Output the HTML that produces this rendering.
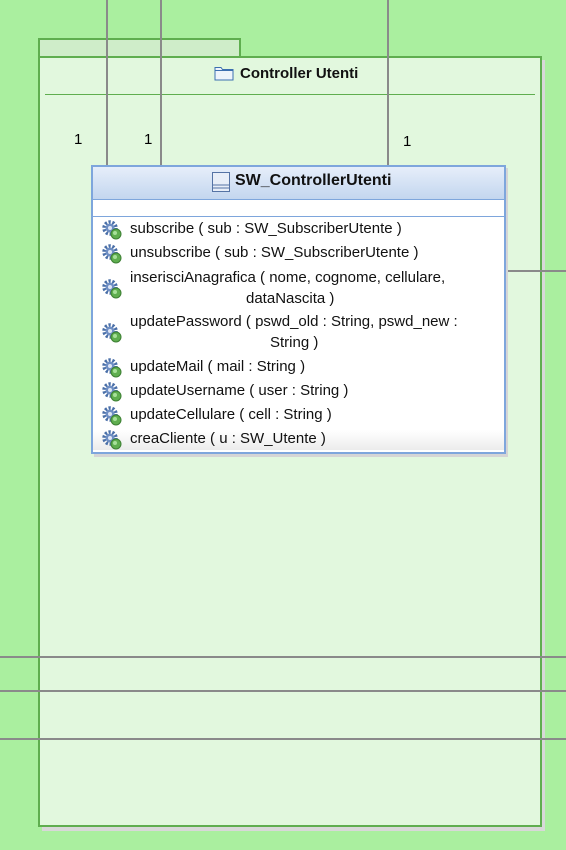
<!DOCTYPE html>
<html><head><style>
body{margin:0;width:566px;height:850px;background:#aaef9f;position:relative;overflow:hidden;font-family:"Liberation Sans",sans-serif;}
.a{position:absolute}
.v{position:absolute;width:2px;background:#8a8a8a}
.h{position:absolute;height:2px;background:#8a8a8a;left:0;width:566px}
.row{position:absolute;left:130px;font-size:15px;color:#111;white-space:nowrap}
.ic{position:absolute;left:101px}
</style></head><body>
<div class="a" style="left:38px;top:38px;width:199px;height:18px;background:#cfedc9;border:2px solid #5fae4f;border-bottom:none"></div>
<div class="a" style="left:42px;top:60px;width:503px;height:771px;background:#d8d8d8"></div>
<div class="a" style="left:38px;top:56px;width:500px;height:767px;background:#e2f8de;border:2px solid #5fae4f"></div>
<div class="a" style="left:45px;top:94px;width:490px;height:1px;background:#5fae4f"></div>
<svg class="a" style="left:214px;top:65px" width="20" height="16"><path d="M1 2.5h6l1.5 2H19V15H1Z" fill="#eef4fb" stroke="#3c6fb0"/><path d="M1 5.5h18" stroke="#3c6fb0"/></svg>
<div class="a" style="left:240px;top:65px;font-size:15px;font-weight:bold;color:#111">Controller Utenti</div>
<div class="v" style="left:106px;top:0;height:165px"></div>
<div class="v" style="left:160px;top:0;height:165px"></div>
<div class="v" style="left:387px;top:0;height:165px"></div>
<div class="a" style="left:74px;top:131px;font-size:15px">1</div>
<div class="a" style="left:144px;top:131px;font-size:15px">1</div>
<div class="a" style="left:403px;top:133px;font-size:15px">1</div>
<div class="h" style="top:656px"></div>
<div class="h" style="top:690px"></div>
<div class="h" style="top:738px"></div>
<div class="a" style="left:504px;top:270px;width:62px;height:2px;background:#8a8a8a"></div>
<div class="a" style="left:94px;top:168px;width:414px;height:289px;background:#d5d5d5"></div>
<div class="a" style="left:91px;top:165px;width:411px;height:285px;background:#fff;border:2px solid #7ea6dc"></div>
<div class="a" style="left:93px;top:167px;width:411px;height:32px;background:linear-gradient(#e6eefa,#c3d6ef);border-bottom:1px solid #7ea6dc"></div>
<div class="a" style="left:92px;top:216px;width:412px;height:1px;background:#7ea6dc"></div>
<svg class="a" style="left:211px;top:171px" width="20" height="22"><rect x="1.5" y="1.5" width="17" height="19" fill="#e8eef8" stroke="#5573a5"/><path d="M1.5 14h17M1.5 17h17" stroke="#5573a5"/></svg>
<div class="a" style="left:235px;top:172px;font-size:16px;font-weight:bold;color:#111">SW_ControllerUtenti</div>
<div class="a" style="left:93px;top:430px;width:411px;height:20px;background:linear-gradient(#fff,#ececec)"></div>
<svg width="0" height="0" style="position:absolute"><defs><g id="g"><circle cx="9" cy="9" r="6" fill="none" stroke="#4a6fa8" stroke-width="3.5" stroke-dasharray="2.2 1.6"/><circle cx="9" cy="9" r="4.5" fill="#6f8fc4"/><circle cx="9" cy="9" r="2" fill="#dfe7f5"/><circle cx="15" cy="15" r="5" fill="#5fae4f" stroke="#3d7f33"/><circle cx="14" cy="14" r="2" fill="#a7e09a"/></g></defs></svg>
<svg class="ic" style="top:219px" width="22" height="22"><use href="#g"/></svg>
<div class="row" style="top:220px">subscribe ( sub : SW_SubscriberUtente )</div>
<svg class="ic" style="top:243px" width="22" height="22"><use href="#g"/></svg>
<div class="row" style="top:244px">unsubscribe ( sub : SW_SubscriberUtente )</div>
<svg class="ic" style="top:278px" width="22" height="22"><use href="#g"/></svg>
<div class="row" style="top:269px">inserisciAnagrafica ( nome, cognome, cellulare,</div>
<div class="row" style="top:290px;left:246px">dataNascita )</div>
<svg class="ic" style="top:322px" width="22" height="22"><use href="#g"/></svg>
<div class="row" style="top:313px">updatePassword ( pswd_old : String, pswd_new :</div>
<div class="row" style="top:334px;left:270px">String )</div>
<svg class="ic" style="top:357px" width="22" height="22"><use href="#g"/></svg>
<div class="row" style="top:358px">updateMail ( mail : String )</div>
<svg class="ic" style="top:381px" width="22" height="22"><use href="#g"/></svg>
<div class="row" style="top:382px">updateUsername ( user : String )</div>
<svg class="ic" style="top:405px" width="22" height="22"><use href="#g"/></svg>
<div class="row" style="top:406px">updateCellulare ( cell : String )</div>
<svg class="ic" style="top:429px" width="22" height="22"><use href="#g"/></svg>
<div class="row" style="top:430px">creaCliente ( u : SW_Utente )</div>
</body></html>
